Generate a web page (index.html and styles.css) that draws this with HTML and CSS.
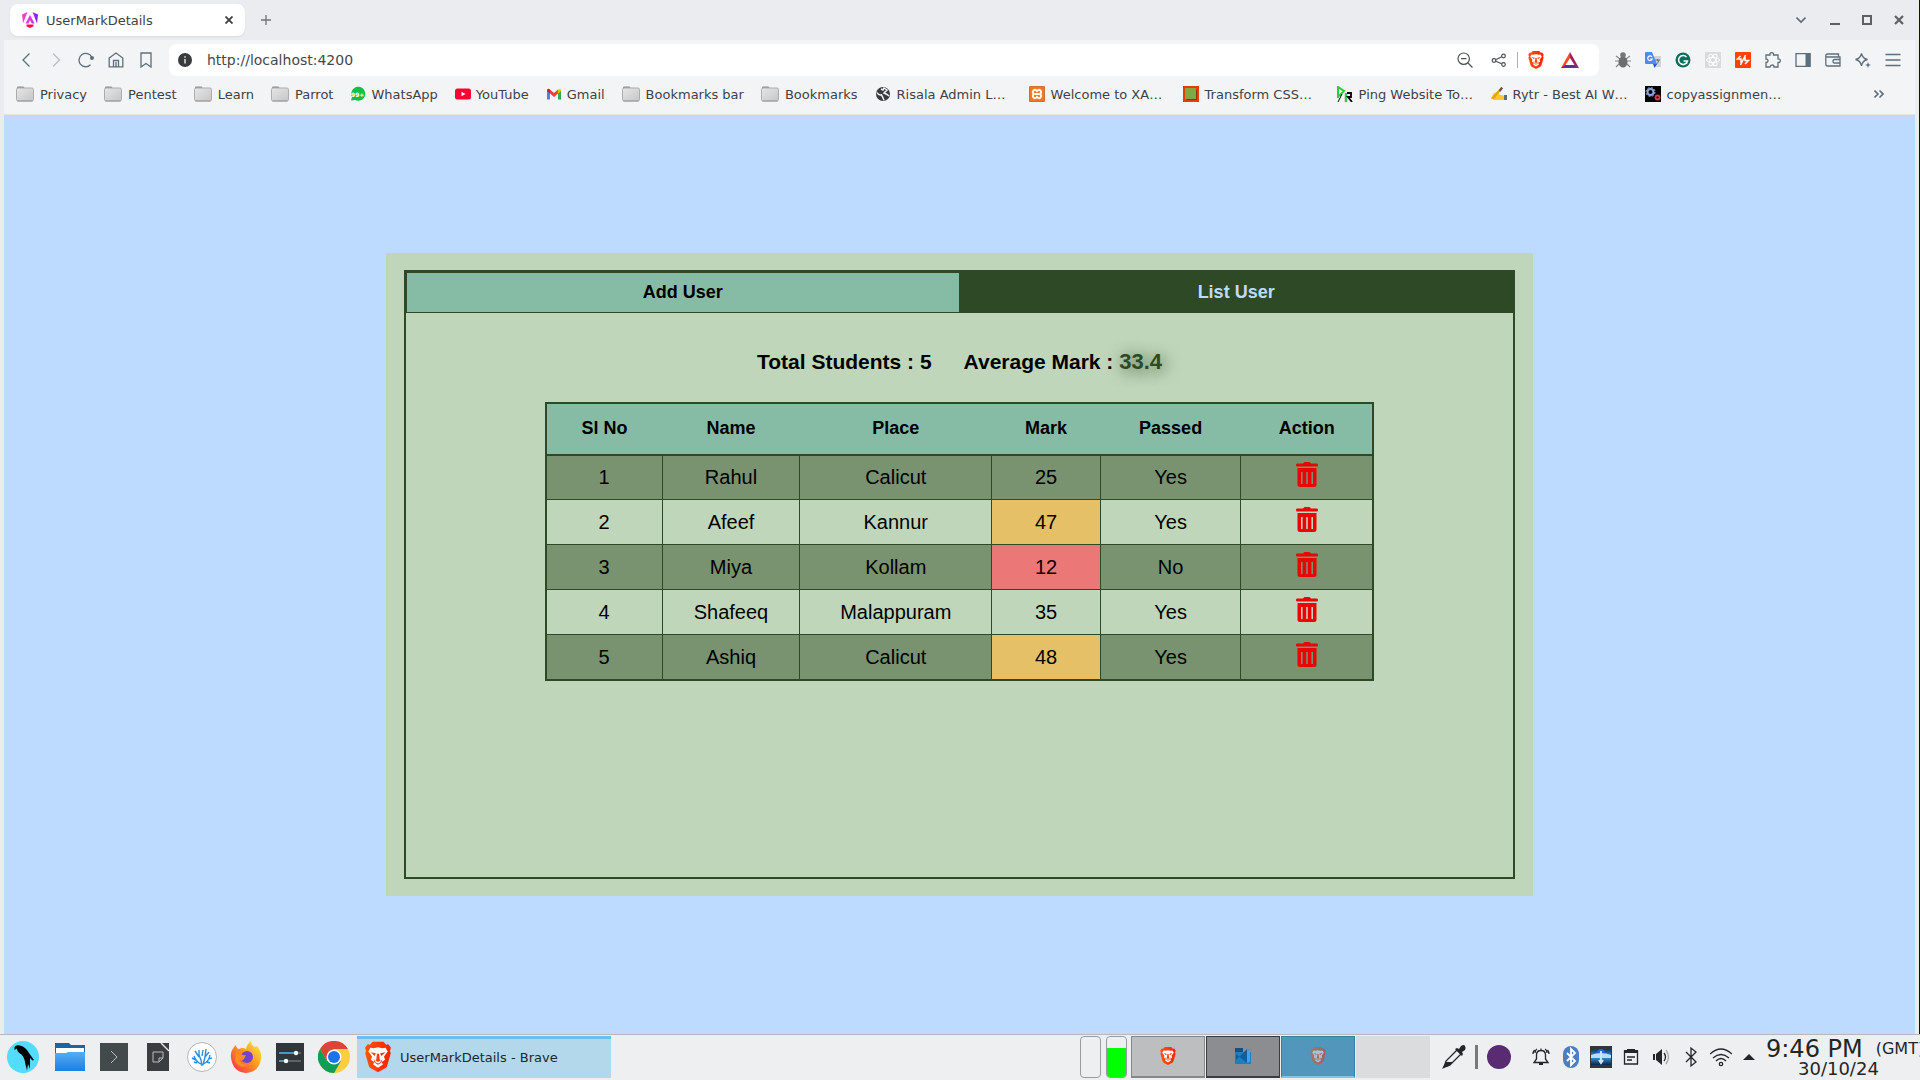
FILE: index.html
```html
<!DOCTYPE html>
<html lang="en">
<head>
<meta charset="utf-8">
<title>UserMarkDetails</title>
<link rel="stylesheet" href="styles.css">
</head>
<body>
<svg class="defs" aria-hidden="true">
  <defs>
    <linearGradient id="folderFill" x1="0" y1="0" x2="1" y2="1"><stop offset="0" stop-color="#e6e6e6"/><stop offset="1" stop-color="#c6c6c6"/></linearGradient>
    <linearGradient id="ngFill" x1="0" y1="0" x2="1" y2="0"><stop offset="0" stop-color="#ff41c8"/><stop offset=".55" stop-color="#e22ef0"/><stop offset="1" stop-color="#6a1bf5"/></linearGradient>
    <linearGradient id="braveFill" x1="0" y1="0" x2="1" y2="0"><stop offset="0" stop-color="#ff5500"/><stop offset="1" stop-color="#ff2000"/></linearGradient>
    <linearGradient id="blueFill" x1="0" y1="0" x2="0" y2="1"><stop offset="0" stop-color="#56aef5"/><stop offset="1" stop-color="#1c7fe0"/></linearGradient>
    <linearGradient id="foxFill" x1="1" y1="0" x2="0" y2="1"><stop offset="0" stop-color="#fff14f"/><stop offset=".45" stop-color="#ff9a1f"/><stop offset="1" stop-color="#f5224f"/></linearGradient>
    <linearGradient id="pictureFill" x1="0" y1="0" x2="0" y2="1"><stop offset="0" stop-color="#12345e"/><stop offset=".5" stop-color="#3f97d8"/><stop offset="1" stop-color="#0c2444"/></linearGradient>
    <symbol id="folder" viewBox="0 0 18 16"><path d="M1 3V1.500Q1 .5 2 .5h5.500l1.500 2" fill="#8f8f8f"/><rect x=".5" y="2" width="17" height="13" rx="1.500" fill="url(#folderFill)" stroke="#adadad"/><path d="M1.500 15h15" stroke="#999"/></symbol>
    <symbol id="brave" viewBox="0 0 24 28"><path d="M7 0h10l2.500 2.700 2-.4L24 5.500l-1 2.700.8 2.300-3.300 11.500q-.4 1.400-1.800 2.400L12 28l-6.700-3.600q-1.400-1-1.800-2.400L.2 10.500 1 8.200 0 5.500l2.500-3.200 2 .4z" fill="url(#braveFill)"/><path d="M5 5.500l3 .5 4-1 4 1 3-.5 2 3.500-3.500 4.500 1 3-3 2.200 1 2.300L12 24l-4.500-3 1-2.300-3-2.200 1-3L3 9z" fill="#fff"/><path d="M5 9.500l5 1-1 2.500zM19 9.500l-5 1 1 2.500zM11 11h2l.5 5 1 1L12 18.500 9.500 17l1-1zM8 15.500l2 3.500 2 1 2-1 2-3.500-.5 3L14 20l-2 1.200L10 20l-1.500-1.500z" fill="url(#braveFill)"/></symbol>
    <symbol id="trash" viewBox="0 0 22 25"><path d="M1 1.500h6L8.500 0h5L15 1.500h6q1 0 1 1.500t-1 1.500H1Q0 4.500 0 3t1-1.500z" fill="#ec0404"/><path fill-rule="evenodd" d="M1.500 6h19v16.500q0 2.500-2.500 2.500H4q-2.500 0-2.500-2.500zM5 10v11.500q0 .8.800.8t.8-.8V10zm5.200 0v11.500q0 .8.800.8t.8-.8V10zm5.200 0v11.500q0 .8.800.8t.8-.8V10z" fill="#ec0404"/></symbol>
  </defs>
</svg>

<div class="window">
<header class="browser">
  <div class="tabstrip">
    <div class="tab">
      <svg class="i16" viewBox="0 0 16 16"><path d="M0 2.500L5.500 0 1 11.500zM10.500 0L16 2.500l-1 9zM8 3l4.500 8.500H9.700L8 8l-1.500 3.500h-3z" fill="url(#ngFill)"/><path d="M4.500 12.500h7v1.700L8 16l-3.500-1.800z" fill="#f60a48"/></svg>
      <span class="tab-title">UserMarkDetails</span>
      <button class="bare" aria-label="Close tab"><svg class="i8" viewBox="0 0 8 8"><path d="M.5.5l7 7M7.500.5l-7 7" stroke="#3b3e42" stroke-width="1.800"/></svg></button>
    </div>
    <button class="bare new-tab" aria-label="New tab"><svg class="i10" viewBox="0 0 10 10"><path d="M5 0v10M0 5h10" stroke="#6f7276" stroke-width="1.300"/></svg></button>
    <div class="window-buttons">
      <button class="bare search-tabs" aria-label="Search tabs"><svg class="i10" viewBox="0 0 10 10"><path d="M.5 2.500L5 7l4.500-4.500" fill="none" stroke="#5c6c7a" stroke-width="1.600"/></svg></button>
      <button class="bare" aria-label="Minimize"><svg class="i10" viewBox="0 0 10 10"><path d="M0 9h10" stroke="#5f6063" stroke-width="2"/></svg></button>
      <button class="bare" aria-label="Maximize"><svg class="i10" viewBox="0 0 10 10"><path d="M1 1h8v8H1z" fill="none" stroke="#5f6063" stroke-width="2"/></svg></button>
      <button class="bare" aria-label="Close"><svg class="i10" viewBox="0 0 10 10"><path d="M1 1l8 8M9 1L1 9" stroke="#5f6063" stroke-width="2.200"/></svg></button>
    </div>
  </div>

  <div class="chrome">
    <div class="toolbar">
      <nav class="nav-buttons">
        <button class="bare" aria-label="Back"><svg class="i16" viewBox="0 0 16 16"><path d="M11.500 1.500L5 8l6.500 6.500" class="line"/></svg></button>
        <button class="bare dim" aria-label="Forward"><svg class="i16" viewBox="0 0 16 16"><path d="M5 1.500L11.500 8 5 14.500" class="line"/></svg></button>
        <button class="bare" aria-label="Reload"><svg class="i16" viewBox="0 0 16 16"><path d="M12.500 12.800A6.700 6.700 0 1 1 13.700 5" class="line"/><circle cx="14" cy="6" r="2" fill="#5c6f7c"/></svg></button>
        <button class="bare" aria-label="Home"><svg class="i16" viewBox="0 0 16 16"><path d="M1.200 6L8 1l6.800 5v8.800H1.200zM5.500 14.500V8.500h5v6M8 10v5" class="line"/></svg></button>
        <button class="bare" aria-label="Bookmark"><svg class="i16" viewBox="0 0 16 16"><path d="M3 1h10v14l-5-3.500L3 15z" class="line"/></svg></button>
      </nav>
      <div class="address">
        <svg class="i14" viewBox="0 0 14 14"><circle cx="7" cy="7" r="7" fill="#3a3b3d"/><path d="M7 6v4.500M7 3.300v1.500" stroke="#d8d8d8" stroke-width="1.600"/></svg>
        <input type="text" value="http://localhost:4200" aria-label="Address">
        <div class="address-tools">
          <svg class="i16" viewBox="0 0 16 16"><g fill="none" stroke="#4b5055" stroke-width="1.200"><circle cx="6.700" cy="6.700" r="5.700"/><path d="M11 11l4.500 4.500M4 6.700h5.500"/></g></svg>
          <svg class="i16" viewBox="0 0 16 16"><g fill="none" stroke="#4b5055" stroke-width="1.200"><circle cx="3" cy="8.500" r="1.800"/><circle cx="12.500" cy="4" r="1.800"/><circle cx="12.500" cy="12.500" r="1.800"/><path d="M4.700 7.700l6-3M4.700 9.300l6 2.500"/></g></svg>
          <span class="divider"></span>
          <svg class="brave-small"><use href="#brave"/></svg>
          <svg class="bat" viewBox="0 0 18 16"><path d="M9 0L0 16h4l5-9z" fill="#ff4724"/><path d="M9 0l9 16-5-3L9 7z" fill="#9e1f63"/><path d="M0 16l4-3h10l4 3z" fill="#662d91"/><path d="M9 6l4.500 7h-9z" fill="#fff"/></svg>
        </div>
      </div>
      <div class="extensions">
        <svg class="i16" viewBox="0 0 16 16"><path d="M1 4l4 3M15 4l-4 3M0 9h16M1 15l4-4M15 15l-4-4" stroke="#888" stroke-width="1.200"/><ellipse cx="8" cy="10" rx="4.500" ry="5.500" fill="#6d6d6d"/><circle cx="8" cy="3" r="2.800" fill="#777"/></svg>
        <svg class="i16" viewBox="0 0 16 16"><path d="M8 4h8v11H9z" fill="#cfd4da"/><path d="M10 8h5M12.500 7v2M10.500 13q3-2 3.500-5" stroke="#68727d" fill="none"/><path d="M1 0h6l5 12H1Q0 12 0 11V1q0-1 1-1z" fill="#4c8bf5"/><path d="M8 12h4l-2.500 4z" fill="#2a5bd0"/><path d="M7 5A2.300 2.300 0 1 0 7.200 7H5" stroke="#fff" stroke-width="1.200" fill="none"/></svg>
        <svg class="i16" viewBox="0 0 16 16"><circle cx="8" cy="8" r="7.500" fill="#05705d"/><path d="M11.500 5A4.500 4.500 0 1 0 12.500 9H8.500M12.300 9l-1 3" stroke="#fff" stroke-width="1.500" fill="none"/></svg>
        <svg class="i16" viewBox="0 0 16 16"><path d="M0 0h16v16H0z" fill="#d9dadb"/><g fill="none" stroke="#fff"><ellipse cx="8" cy="8" rx="6.500" ry="2.500"/><ellipse cx="8" cy="8" rx="6.500" ry="2.500" transform="rotate(60 8 8)"/><ellipse cx="8" cy="8" rx="6.500" ry="2.500" transform="rotate(120 8 8)"/></g></svg>
        <svg class="i16" viewBox="0 0 16 16"><rect width="16" height="16" rx="1" fill="#ff4208"/><path d="M5.500 4L2.500 7h3.500v4M10.500 3l-5 10M10 5v3.500h3.500L10 12" fill="none" stroke="#fff" stroke-width="1.500"/></svg>
        <svg class="i16" viewBox="0 0 16 16"><path d="M1 3h4q-.5-2.300 1.700-2.300T8.500 3H13v4q2.300-.3 2.300 1.700T13 10.500V15H9q0-2-1.800-2T5 15H1v-4.500q2 0 2-1.800T1 7z" class="line"/></svg>
        <svg class="i16" viewBox="0 0 16 16"><path d="M1 1.700h14v12.600H1z" class="line"/><path d="M10.500 1h5v14h-5z" fill="#5c6f7c"/></svg>
        <svg class="i16" viewBox="0 0 16 16"><path d="M13.500 5V2H2.500Q.8 2 .8 3.500T2.500 5H15v9H2.500Q.8 14 .8 12V3.500M15 7.500H9.500Q8 7.500 8 9.300T9.500 11H15" class="line"/></svg>
        <svg class="i16" viewBox="0 0 16 16"><path d="M6.500 1.500Q7.500 6.500 12.500 7.500 7.500 8.500 6.500 14 5.500 8.500.5 7.500 5.500 6.500 6.500 1.500z" class="line"/><path d="M13 10l.8 2.200L16 13l-2.200.8L13 16l-.8-2.200L10 13l2.200-.8z" fill="#5c6f7c"/></svg>
        <svg class="i16" viewBox="0 0 16 16"><path d="M.5 2.500h15M.5 8h15M.5 13.500h15" class="line"/></svg>
      </div>
    </div>

    <nav class="bookmarks">
      <a href="#"><svg class="folder"><use href="#folder"/></svg>Privacy</a>
      <a href="#"><svg class="folder"><use href="#folder"/></svg>Pentest</a>
      <a href="#"><svg class="folder"><use href="#folder"/></svg>Learn</a>
      <a href="#"><svg class="folder"><use href="#folder"/></svg>Parrot</a>
      <a href="#" class="site"><svg class="i16" viewBox="0 0 16 16"><path d="M1 14.500L2 11A7 7 0 1 1 5 14z" fill="#12c143"/><text x="1" y="10.500" class="badge">99+</text></svg>WhatsApp</a>
      <a href="#" class="site"><svg class="i16" viewBox="0 0 16 16"><rect y="2.500" width="16" height="11" rx="2.500" fill="#ff0033"/><path d="M6.500 5.800v4.400L10.500 8z" fill="#fff"/></svg>YouTube</a>
      <a href="#" class="site"><svg class="i16" viewBox="0 0 16 16"><path d="M1 4l3 2v7.500H1z" fill="#4285f4"/><path d="M12 6l3-2v9.500h-3z" fill="#34a853"/><path d="M12 4l1.500-1.200Q15 3 15 5l-3 2.500z" fill="#fbbc04"/><path d="M4 3.500L8 7l4-3.500v4L8 11 4 7.500z" fill="#ea4335"/><path d="M4 3.500v4L1 5q0-2.500 1.500-2.200z" fill="#c5221f"/></svg>Gmail</a>
      <a href="#"><svg class="folder"><use href="#folder"/></svg>Bookmarks bar</a>
      <a href="#"><svg class="folder"><use href="#folder"/></svg>Bookmarks</a>
      <a href="#" class="clipped"><svg class="i16" viewBox="0 0 16 16"><circle cx="8" cy="8" r="7" fill="#383b40"/><path d="M2 6.500q1.500 3 4.500 2.300l1 2 1.500 3.500M6 3l2 1 1-2 3 2-3 3 3 1.500 2 1.500" fill="none" stroke="#f3f4f6" stroke-width="1.500"/></svg>Risala Admin L…</a>
      <a href="#" class="clipped"><svg class="i16" viewBox="0 0 16 16"><rect width="16" height="16" rx="1" fill="#c9723b"/><rect x="1" y="1" width="14" height="14" rx="1" fill="#f37623"/><path d="M4.500 4.500Q6.500 3 8 5q1.500-2 3.500-.5 1.500 2-.5 3.500 2 1.500.5 3.500-2 1.500-3.500-.5-1.500 2-3.500.5Q3 9.500 5 8 3 6.500 4.500 4.500zM6 8h4" fill="none" stroke="#fff" stroke-width="2"/></svg>Welcome to XA…</a>
      <a href="#" class="clipped"><svg class="i16" viewBox="0 0 16 16"><path d="M0 0h16v16H0z" fill="#e73c07"/><path d="M4 4h10v10H4z" fill="#8d3413"/><path d="M2 2h11v11H2z" fill="#7cab42"/></svg>Transform CSS…</a>
      <a href="#" class="clipped"><svg class="i16" viewBox="0 0 16 16"><path d="M1 12V1l6 4-5 5" fill="none" stroke="#24cf46" stroke-width="2"/><path d="M1 16l4-8" stroke="#000"/><path d="M9 16V7" stroke="#24cf46" stroke-width="2.500"/><path d="M10 7h4v4h-3l4 5" fill="none" stroke="#000" stroke-width="1.800"/></svg>Ping Website To…</a>
      <a href="#" class="clipped"><svg class="i16" viewBox="0 0 16 16"><path d="M0 12l3-5 4-1 2 3 6 1v4H3z" fill="#fbc72b"/><path d="M0 12.500L10 1l2 1L3 13z" fill="#e6a21c"/><path d="M8 4l2.500-3L12 2.500 9 6z" fill="#555"/><path d="M13 9h3v5h-3z" fill="#5c7078"/></svg>Rytr - Best AI W…</a>
      <a href="#" class="clipped"><svg class="i16" viewBox="0 0 16 16"><path d="M0 0h16v16H0z"/><circle cx="5.500" cy="6" r="3" fill="none" stroke="#8ea3df" stroke-width="2"/><circle cx="5.500" cy="6" r="4.500" fill="none" stroke="#8ea3df" stroke-dasharray="2 1.500"/><circle cx="12.500" cy="11.500" r="2" fill="none" stroke="#d9404b" stroke-width="1.800"/></svg>copyassignmen…</a>
      <button class="bare more" aria-label="More bookmarks"><svg class="i10" viewBox="0 0 10 10"><path d="M.5 1.500L4 5 .5 8.500M5.500 1.500L9 5 5.500 8.500" fill="none" stroke="#5c6c7a" stroke-width="1.600"/></svg></button>
    </nav>
  </div>
</header>

<main class="page">
  <section class="card">
    <div class="panel">
      <div class="tabs">
        <button class="tab-button">Add User</button>
        <button class="tab-button active">List User</button>
      </div>
      <div class="summary">
        <span>Total Students : 5</span>
        <span>Average Mark : <strong class="average">33.4</strong></span>
      </div>
      <table class="students">
        <colgroup><col class="c-no"><col class="c-name"><col class="c-place"><col class="c-mark"><col class="c-passed"><col class="c-action"></colgroup>
        <thead>
          <tr><th>Sl No</th><th>Name</th><th>Place</th><th>Mark</th><th>Passed</th><th>Action</th></tr>
        </thead>
        <tbody>
          <tr><td>1</td><td>Rahul</td><td>Calicut</td><td>25</td><td>Yes</td><td><button class="bare" aria-label="Delete Rahul"><svg class="trash"><use href="#trash"/></svg></button></td></tr>
          <tr><td>2</td><td>Afeef</td><td>Kannur</td><td class="high">47</td><td>Yes</td><td><button class="bare" aria-label="Delete Afeef"><svg class="trash"><use href="#trash"/></svg></button></td></tr>
          <tr><td>3</td><td>Miya</td><td>Kollam</td><td class="low">12</td><td>No</td><td><button class="bare" aria-label="Delete Miya"><svg class="trash"><use href="#trash"/></svg></button></td></tr>
          <tr><td>4</td><td>Shafeeq</td><td>Malappuram</td><td>35</td><td>Yes</td><td><button class="bare" aria-label="Delete Shafeeq"><svg class="trash"><use href="#trash"/></svg></button></td></tr>
          <tr><td>5</td><td>Ashiq</td><td>Calicut</td><td class="high">48</td><td>Yes</td><td><button class="bare" aria-label="Delete Ashiq"><svg class="trash"><use href="#trash"/></svg></button></td></tr>
        </tbody>
      </table>
    </div>
  </section>
</main>
</div>

<footer class="taskbar">
  <div class="launchers">
    <button class="bare start" aria-label="Menu"><svg class="i32" viewBox="0 0 32 32"><circle cx="16" cy="16" r="16" fill="#54dcff"/><path d="M7.500 6Q9 3.500 13 4.500q6 1.500 9 7.500 2 3 5 7l-1.500.5-2.500-2.500 0 11-2-5-1 6.500-1.500-6q-1-7-4-10Q10 11 10 7.500L7.500 9z"/></svg></button>
    <button class="bare" aria-label="Files"><svg class="i32" viewBox="0 0 32 32"><path d="M1 2h14l2 2h14v11H1z" fill="#1e659f"/><path d="M2 7h28v8H2z" fill="#fff"/><path d="M1 12h11l2-1h17v19H1z" fill="url(#blueFill)"/></svg></button>
    <button class="bare" aria-label="Terminal"><svg class="i32" viewBox="0 0 32 32"><path d="M2 2h28v28H2z" fill="#434a4c"/><path d="M13 10l6 6-6 6" fill="none" stroke="#b9bdbe"/></svg></button>
    <button class="bare" aria-label="Notes"><svg class="i32" viewBox="0 0 32 32"><path d="M5 2h22v28H5z" fill="#3a3e41"/><path d="M19 2l8 8" stroke="#e4e5e6" stroke-width="1.500"/><path d="M11 11h10v6l-4 4h-6zM21 17h-4v4" fill="none" stroke="#bbb"/></svg></button>
    <button class="bare" aria-label="Coral"><svg class="i32" viewBox="0 0 32 32"><circle cx="16" cy="16" r="14.500" fill="#fff" stroke="#b5b5b5"/><path d="M16 25l-1-6-2-5V9M15 23q-5-2-7-8M17 23q6-2 7-9M17 24l2-8 1-8M13 16L9 10M19 16l4-5M16 15l1-6M10 19l-4-2M22 18l4-1M11 22l-3-1M21 21l3 1" fill="none" stroke="#2f8cdb" stroke-width="1.400"/></svg></button>
    <button class="bare" aria-label="Firefox"><svg class="i32" viewBox="0 0 32 32"><path d="M1 17Q0 9 6 4q0 3 3 4 4-2 7 0Q17 3 21 0q0 4 4 6l2-1q5 6 4 13-2 13-15 14Q3 31 1 17z" fill="url(#foxFill)"/><circle cx="17" cy="16" r="6" fill="#7542cf"/><path d="M6 11q7 4 10 3l-2 4q-2 2-5 1 3 5 9 5-8 5-13-4z" fill="#ff8b22"/></svg></button>
    <button class="bare" aria-label="Settings"><svg class="i32" viewBox="0 0 32 32"><path d="M2 2h28v28H2z" fill="#31363b"/><path d="M5 12h22M5 20h22" stroke="#6b7276" stroke-width="1.500"/><path d="M5 12h17M5 20h7" stroke="#3daee9" stroke-width="1.500"/><circle cx="22" cy="12" r="2.200" fill="#fff"/><circle cx="12" cy="20" r="2.200" fill="#fff"/></svg></button>
    <button class="bare" aria-label="Chrome"><svg class="i32" viewBox="0 0 32 32"><circle cx="16" cy="16" r="16" fill="#ffcd40"/><path d="M2.100 8a16 16 0 0 1 27.800 0H16l-7 12z" fill="#db4437"/><path d="M2.100 8A16 16 0 0 0 16 32l7-12-7-4-7 4z" fill="#0f9d58"/><circle cx="16" cy="16" r="7.500" fill="#fff"/><circle cx="16" cy="16" r="6" fill="#1a73e8"/></svg></button>
  </div>
  <button class="task"><svg class="brave-large"><use href="#brave"/></svg>UserMarkDetails - Brave</button>
  <div class="meters"><span class="meter"></span><span class="meter"><span class="level"></span></span></div>
  <div class="pager">
    <button class="desk d1" aria-label="Desktop 1"><svg class="brave-small"><use href="#brave"/></svg></button>
    <button class="desk d2" aria-label="Desktop 2"><svg class="i16" viewBox="0 0 16 16"><path d="M0 0h8v5H0z" fill="#164f80"/><path d="M0 4h16v12H0z" fill="#1f7dc0"/><path d="M1 6l11 9 3-1V2l-3-1L1 12z" fill="#0d5fa0"/><path d="M12 1l3 1v12l-3 1z" fill="#3aa5ef"/></svg></button>
    <button class="desk d3" aria-label="Desktop 3"><svg class="brave-small faded"><use href="#brave"/></svg></button>
    <button class="desk d4" aria-label="Desktop 4"></button>
  </div>
  <div class="picker">
    <svg class="i24" viewBox="0 0 24 24"><path d="M2 22l2-6L15 5l4 4L8 20z" fill="none" stroke="#232629" stroke-width="1.300"/><path d="M4 17h7l-4 4-5 2-2 1 1-2z" fill="#232629"/><path d="M13 4l2-1 2 1 2-3q3-2 4 0t0 4l-3 2 1 2-1 2z" fill="#232629"/></svg>
    <span class="bar"></span>
    <span class="swatch"></span>
  </div>
  <div class="tray">
    <svg class="i22" viewBox="0 0 22 22"><path d="M4 16.500h14L15.500 13V9q0-4.500-4.500-4.500T6.500 9v4zM11 2.500v2M4.500 4Q3 6 3 8M7 3Q5 4 5 7M17.500 4Q19 6 19 8M15 3q2 1 2 4" class="ink"/><path d="M9 17h4v2H9z" fill="#232629"/></svg>
    <svg class="i22" viewBox="0 0 22 22"><rect x="3" width="16" height="22" rx="8" fill="#4b7fc0"/><path d="M7 7l8 8-4 4V3l4 4-8 8" fill="none" stroke="#fff" stroke-width="1.800"/></svg>
    <svg class="i22" viewBox="0 0 22 22"><path d="M0 0h22v22H0z" fill="#31363b"/><path d="M1 3h20v16H1z" fill="url(#pictureFill)"/><circle cx="11" cy="7" r="4" fill="#1c68e0"/><path d="M1 9q10-4 20 0v3H1z" fill="#b8def5"/><path d="M11 5v11M9 14l2 3 2-3" stroke="#c8e8fb" stroke-width="2" fill="none"/></svg>
    <svg class="i22" viewBox="0 0 22 22"><path d="M4.500 5h13v13h-13zM7 11h8M7 14h5" class="ink"/><path d="M7 3h8v4H7zM4 4h14v3H4z" fill="#232629"/></svg>
    <svg class="i22" viewBox="0 0 22 22"><path d="M3 8h2v6H3zM6 8l6-5v16l-6-5z" fill="#232629"/><path d="M14 7q3 4 0 8" class="ink"/><path d="M16 4q5 7 0 14" class="ink" opacity=".35"/></svg>
    <svg class="i22" viewBox="0 0 22 22"><path d="M6 6l10 10-5 4V2l5 4L6 16" class="ink"/></svg>
    <svg class="i22" viewBox="0 0 22 22"><path d="M0 8Q11-2 22 8M3 12q8-7 16 0M6 15q5-5 10 0" class="ink"/><circle cx="11" cy="18" r="1.700" class="ink"/></svg>
    <svg class="arrow" viewBox="0 0 12 6"><path d="M0 6l6-6 6 6z" fill="#232629"/></svg>
  </div>
  <div class="clock">
    <div class="clock-row"><span class="time">9:46 PM</span><span class="zone">(GMT)</span></div>
    <div class="date">30/10/24</div>
  </div>
</footer>
</body>
</html>
```

FILE: styles.css
```css
* { box-sizing: border-box; }

body {
  margin: 0;
  min-height: 100vh;
  display: flex;
  flex-direction: column;
  background: #ebecf0;
  font-family: "DejaVu Sans", sans-serif;
  font-size: 13px;
  color: #3f4246;
  overflow: hidden;
}

svg { display: block; flex: none; }
.defs { position: absolute; width: 0; height: 0; }
.bare { padding: 0; border: 0; background: none; display: block; cursor: pointer; }
.dim { opacity: .4; }
.line { fill: none; stroke: #5c6f7c; stroke-width: 1.300; }
.ink { fill: none; stroke: #232629; stroke-width: 1.300; }
.i8 { width: 8px; height: 8px; }
.i10 { width: 10px; height: 10px; }
.i14 { width: 14px; height: 14px; }
.i16 { width: 16px; height: 16px; }
.i22 { width: 22px; height: 22px; }
.i24 { width: 24px; height: 24px; }
.i32 { width: 32px; height: 32px; }
.brave-small { width: 16px; height: 18px; }
.brave-large { width: 26px; height: 32px; }
.bat { width: 18px; height: 16px; margin-left: -1px; }

/* Browser window frame */
.window { flex: 1; display: flex; flex-direction: column; border-right: 1px solid #0d0d3c; }
.tabstrip { height: 40px; padding: 0 15px 0 10px; display: flex; align-items: center; }
.tab {
  width: 235px;
  height: 32px;
  padding: 0 12px;
  display: flex;
  align-items: center;
  gap: 8px;
  background: #fff;
  border-radius: 8px;
  box-shadow: 0 1px 2px #0001;
}
.tab-title { flex: 1; }
.new-tab { margin-left: 16px; }
.window-buttons { margin-left: auto; display: flex; gap: 22px; }
.search-tabs { margin-right: 2px; }
.chrome { margin: 0 4px; background: #f3f4f6; border-bottom: 1px solid #e3e5e8; }
.toolbar { padding: 4px 14px 0; display: flex; align-items: center; }
.nav-buttons { display: flex; gap: 14px; }
.address {
  flex: 1;
  height: 32px;
  margin: 0 16px 0 15px;
  padding: 0 20px 0 9px;
  display: flex;
  align-items: center;
  gap: 15px;
  background: #fff;
  border-radius: 8px;
}
.address input {
  flex: 1;
  padding: 0;
  border: 0;
  outline: 0;
  background: none;
  font: 14px "DejaVu Sans", sans-serif;
  color: #45484c;
}
.address-tools { display: flex; align-items: center; gap: 18px; }
.divider { width: 1px; height: 16px; margin: 0 -8px 0 -8px; background: #b0b2b6; }
.extensions { display: flex; gap: 14px; }
.bookmarks { height: 38px; padding: 0 31px 2px 12px; display: flex; align-items: center; gap: 17px; }
.bookmarks a { display: flex; align-items: center; gap: 6px; color: inherit; text-decoration: none; white-space: nowrap; }
.bookmarks .site { gap: 5px; }
.bookmarks .clipped { width: 137px; }
.bookmarks .more { margin-left: auto; }
.folder { width: 18px; height: 16px; }
.badge { font: bold 6px "DejaVu Sans", sans-serif; fill: #fff; }

/* Application */
.page {
  flex: 1;
  margin: 0 4px;
  display: grid;
  place-items: center;
  background: #bddbff;
  font-family: "Liberation Sans", Arial, sans-serif;
  color: #000;
}
.card { width: 60%; height: 70%; padding: 17px 18px; display: flex; background: #c0d6ba; }
.panel { flex: 1; display: flex; flex-direction: column; align-items: center; border: 2px solid #2e4925; }
.tabs { align-self: stretch; display: flex; }
.tab-button {
  flex: 1;
  height: 41px;
  padding: 0;
  border: 1px solid #2e4925;
  background: #86bca6;
  font: bold 18px "Liberation Sans", Arial, sans-serif;
  color: #000;
}
.tab-button.active { background: #2e4925; color: #bddbff; }
.summary { margin: 34px 0 25px; display: flex; align-items: baseline; gap: 32px; font-size: 21px; font-weight: bold; line-height: 30px; }
.average { font-size: 22px; line-height: 24px; color: #2e4925; text-shadow: 2px 2px 16px #2e4925; }
.students { width: 75%; table-layout: fixed; border-collapse: collapse; border: 2px solid #2e4925; text-align: center; }
.students th { height: 52px; padding: 0; background: #86bca6; font-size: 18px; }
.students thead { border-bottom: 2px solid #2e4925; }
.students td { height: 45px; padding: 0; border: 1px solid #2e4925; font-size: 20px; }
.students tbody tr:nth-child(odd) { background: #79926f; }
.students .high { background: #e5c066; }
.students .low { background: #ec7777; }
.students td .bare { margin: 0 auto 6px; }
.trash { width: 22px; height: 25px; }
.c-no { width: 14.100%; }
.c-name { width: 16.600%; }
.c-place { width: 23.200%; }
.c-mark { width: 13.100%; }
.c-passed { width: 17%; }
.c-action { width: 16%; }

/* Desktop panel */
.taskbar { height: 46px; padding-bottom: 2px; display: flex; align-items: center; background: #eeeff1; border-top: 1px solid #b5b7ba; white-space: nowrap; }
.launchers { padding: 0 7px; display: flex; gap: 12px; }
.start { margin-right: 3px; }
.task {
  width: 254px;
  height: 42px;
  padding: 0 8px 2px;
  display: flex;
  align-items: center;
  gap: 9px;
  border: 0;
  border-top: 3px solid #6dbde9;
  background: #b3d8ec;
  font: 13px "DejaVu Sans", sans-serif;
  color: #232629;
}
.meters { margin-left: auto; display: flex; gap: 5px; }
.meter { width: 21px; height: 42px; display: flex; align-items: flex-end; border: 1px solid #999b9e; border-radius: 4px; overflow: hidden; }
.level { flex: 1; height: 29px; background: #00ff00; }
.pager { margin-left: 4px; display: flex; gap: 1px; }
.desk { width: 74px; height: 42px; padding: 0; display: grid; place-items: center; border: 1px solid; border-bottom-width: 2px; }
.d1 { background: #bdbec0; border-color: #85878a; }
.d2 { background: #8c8d91; border-color: #393c40; }
.d3 { background: #5297bb; border-color: #3a7da0; border-bottom-color: #80c4ee; }
.d4 { background: #dbdcde; border-color: #dbdcde; }
.faded { opacity: .45; }
.picker { margin-left: 12px; display: flex; align-items: center; gap: 9px; }
.bar { width: 3px; height: 24px; background: #77797b; }
.swatch { width: 24px; height: 24px; border-radius: 50%; background: #592b72; }
.tray { margin-left: 19px; display: flex; align-items: center; gap: 8px; }
.arrow { width: 12px; height: 6px; margin-left: 3px; }
.clock { width: 165px; padding-left: 11px; color: #232629; }
.clock-row { display: flex; align-items: center; gap: 13px; line-height: 24px; }
.time { font-size: 24px; }
.zone { font-size: 16px; }
.date { padding-left: 32px; font-size: 18px; line-height: 16px; }
```
